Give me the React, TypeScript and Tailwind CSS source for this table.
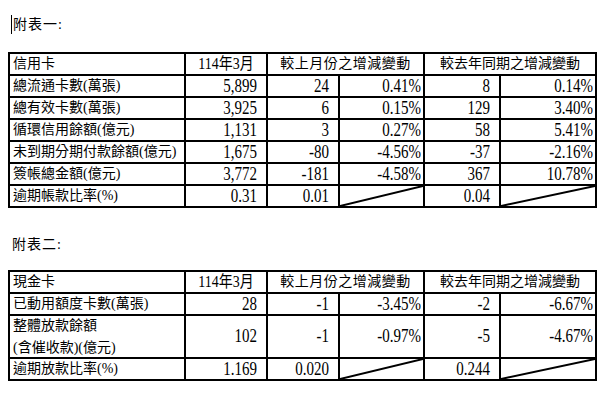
import React from "react";

const font = { fontFamily: '"Liberation Serif", "Noto Sans CJK TC", serif' };

function Diag() {
  return (
    <svg className="absolute inset-0 w-full h-full" preserveAspectRatio="none" viewBox="0 0 100 100">
      <line x1="0" y1="100" x2="100" y2="0" stroke="#000" strokeWidth="2" vectorEffect="non-scaling-stroke" />
    </svg>
  );
}

const td = "border-2 border-black px-[3px] leading-none whitespace-nowrap";
const numCell = `${td} text-right pr-[9px]`;
const pctCell = `${td} text-right pr-[2px]`;

function N({ v }: { v: string }) {
  return <span className="inline-block text-[15px] scale-y-[1.3] origin-center">{v}</span>;
}

function Colgroup() {
  return (
    <colgroup>
      <col className="w-[176px]" />
      <col className="w-[82px]" />
      <col className="w-[72px]" />
      <col className="w-[85px]" />
      <col className="w-[76px]" />
      <col className="w-[96px]" />
    </colgroup>
  );
}

type Row = [string, string, string, string, string, string];

const rows1: Row[] = [
  ["總流通卡數(萬張)", "5,899", "24", "0.41%", "8", "0.14%"],
  ["總有效卡數(萬張)", "3,925", "6", "0.15%", "129", "3.40%"],
  ["循環信用餘額(億元)", "1,131", "3", "0.27%", "58", "5.41%"],
  ["未到期分期付款餘額(億元)", "1,675", "-80", "-4.56%", "-37", "-2.16%"],
  ["簽帳總金額(億元)", "3,772", "-181", "-4.58%", "367", "10.78%"],
];

function Header({ first }: { first: string }) {
  return (
    <tr className="h-[22px]">
      <td className={`${td} text-left`}>{first}</td>
      <td className={`${td} text-center`}>
        <span className="inline-block scale-y-[1.15]">114年3月</span>
      </td>
      <td className={`${td} text-center tracking-[0.5px]`} colSpan={2}>較上月份之增減變動</td>
      <td className={`${td} text-center`} colSpan={2}>較去年同期之增減變動</td>
    </tr>
  );
}

function DataRow({ r }: { r: Row }) {
  return (
    <tr className="h-[22px]">
      <td className={`${td} text-left`}>{r[0]}</td>
      <td className={numCell}><N v={r[1]} /></td>
      <td className={numCell}><N v={r[2]} /></td>
      <td className={pctCell}><N v={r[3]} /></td>
      <td className={numCell}><N v={r[4]} /></td>
      <td className={pctCell}><N v={r[5]} /></td>
    </tr>
  );
}

function LastRow({ a, b, c, d }: { a: string; b: string; c: string; d: string }) {
  return (
    <tr className="h-[22px]">
      <td className={`${td} text-left`}>{a}</td>
      <td className={numCell}><N v={b} /></td>
      <td className={numCell}><N v={c} /></td>
      <td className={`${td} relative`}><Diag /></td>
      <td className={numCell}><N v={d} /></td>
      <td className={`${td} relative`}><Diag /></td>
    </tr>
  );
}

export default function App() {
  return (
    <div className="w-[600px] h-[400px] bg-white text-black text-[14px] overflow-hidden" style={font}>
      <div className="pt-[14px] pl-[11px] flex items-center h-[20px] box-content">
        <span className="w-px h-[19px] bg-black mr-px" />
        <span className="tracking-[1px]">附表一:</span>
      </div>
      <table className="ml-[8px] mt-[18px] border-collapse table-fixed w-[587px]">
        <Colgroup />
        <tbody>
          <Header first="信用卡" />
          {rows1.map((r) => (
            <DataRow key={r[0]} r={r} />
          ))}
          <LastRow a="逾期帳款比率(%)" b="0.31" c="0.01" d="0.04" />
        </tbody>
      </table>
      <div className="mt-[29px] pl-[12px] h-[14px] flex items-center">
        <span className="tracking-[1px]">附表二:</span>
      </div>
      <table className="ml-[8px] mt-[19px] border-collapse table-fixed w-[587px]">
        <Colgroup />
        <tbody>
          <Header first="現金卡" />
          <DataRow r={["已動用額度卡數(萬張)", "28", "-1", "-3.45%", "-2", "-6.67%"]} />
          <tr className="h-[43px]">
            <td className={`${td} text-left`}>
              <div className="flex flex-col gap-[8px]">
                <span>整體放款餘額</span>
                <span>(含催收款)(億元)</span>
              </div>
            </td>
            <td className={numCell}><N v="102" /></td>
            <td className={numCell}><N v="-1" /></td>
            <td className={pctCell}><N v="-0.97%" /></td>
            <td className={numCell}><N v="-5" /></td>
            <td className={pctCell}><N v="-4.67%" /></td>
          </tr>
          <LastRow a="逾期放款比率(%)" b="1.169" c="0.020" d="0.244" />
        </tbody>
      </table>
    </div>
  );
}
